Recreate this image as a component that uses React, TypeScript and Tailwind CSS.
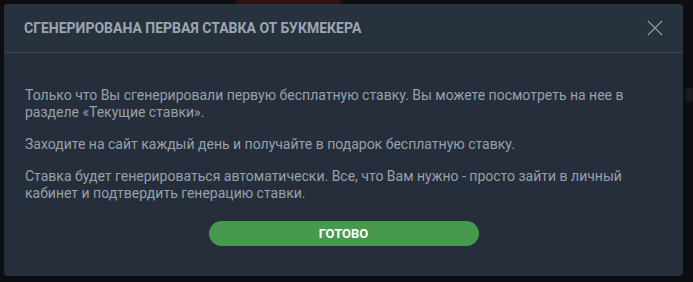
import React from "react";

const paragraphs = [
  "Только что Вы сгенерировали первую бесплатную ставку. Вы можете посмотреть на нее в разделе «Текущие ставки».",
  "Заходите на сайт каждый день и получайте в подарок бесплатную ставку.",
  "Ставка будет генерироваться автоматически. Все, что Вам нужно - просто зайти в личный кабинет и подтвердить генерацию ставки.",
];

const CloseIcon = () => (
  <svg width="16" height="16" viewBox="0 0 16 16" fill="none" aria-hidden="true">
    <path d="M1 1L15 15M15 1L1 15" stroke="#8a95a1" strokeWidth="1.3" />
  </svg>
);

const App = () => {
  return (
    <div className="relative h-[282px] w-[693px] overflow-hidden bg-[#0c0e11] p-1 font-['Roboto','Liberation_Sans',sans-serif]">
      {/* blurred page content behind the modal */}
      <div className="absolute left-[236px] top-0 h-[4px] w-[105px] bg-[#3a1414] blur-[1px]" />
      <div className="absolute left-[686px] top-[88px] h-[14px] w-[7px] bg-[#1a1d22] blur-[1px]" />

      <div className="relative flex h-[272px] w-[679px] flex-col rounded-[4px] bg-[#252e3a]">
        <div className="flex h-[49px] shrink-0 items-center justify-between rounded-t-[4px] border-b border-[#3a4654] bg-[#28323e] pl-[20px] pr-[16px]">
          <h2 className="text-[14px] font-bold uppercase text-[#9ba6b2]">
            Сгенерирована первая ставка от букмекера
          </h2>
          <button className="flex h-6 w-6 items-center justify-center">
            <CloseIcon />
          </button>
        </div>

        <div className="flex flex-1 flex-col px-[21px] pt-[34px]">
          {paragraphs.map((text, i) => (
            <p
              key={i}
              className="mb-[15px] text-[14px] leading-[17px] text-[#97a1ac]"
            >
              {text}
            </p>
          ))}
          <button className="mx-auto mt-[4px] h-[25px] w-[270px] rounded-full bg-[#479a4d] text-[13px] font-bold uppercase text-white">
            Готово
          </button>
        </div>
      </div>
    </div>
  );
};

export default App;
